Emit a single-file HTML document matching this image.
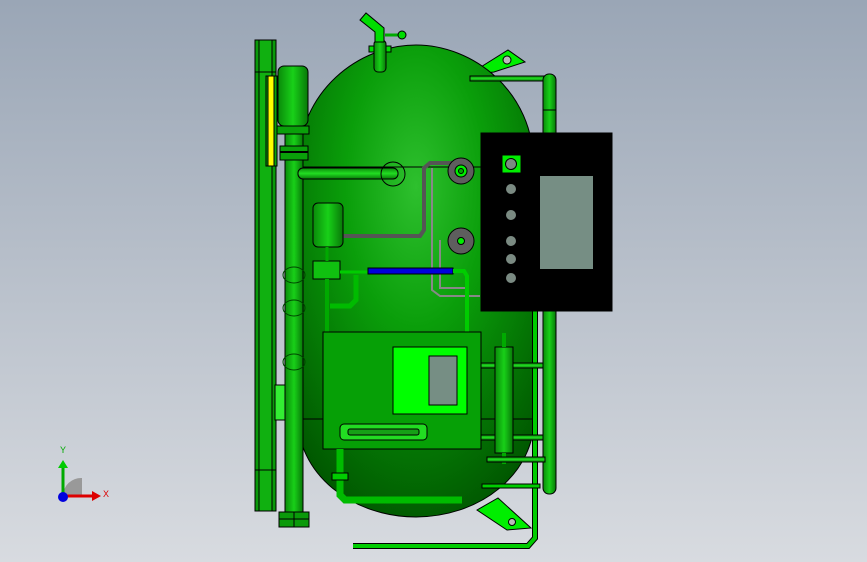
<!DOCTYPE html>
<html><head><meta charset="utf-8"><style>
html,body{margin:0;padding:0;width:867px;height:562px;overflow:hidden}
svg{display:block}
</style></head><body>
<svg width="867" height="562" viewBox="0 0 867 562" xmlns="http://www.w3.org/2000/svg" stroke="#000" stroke-width="1">
<defs>
<linearGradient id="bg" x1="0" y1="0" x2="0" y2="1"><stop offset="0" stop-color="#9aa6b6"/><stop offset="1" stop-color="#d8dbe0"/></linearGradient>
<radialGradient id="tank" cx="0.5" cy="0.3" r="0.75"><stop offset="0" stop-color="#2ec02e"/><stop offset="0.4" stop-color="#0a9e0a"/><stop offset="1" stop-color="#005500"/></radialGradient>
<linearGradient id="pipe" x1="0" y1="0" x2="1" y2="0"><stop offset="0" stop-color="#0a8a0a"/><stop offset="0.5" stop-color="#18d018"/><stop offset="1" stop-color="#087808"/></linearGradient>
<linearGradient id="pipeh" x1="0" y1="0" x2="0" y2="1"><stop offset="0" stop-color="#0a8a0a"/><stop offset="0.5" stop-color="#22dd22"/><stop offset="1" stop-color="#087808"/></linearGradient>
</defs>
<rect width="867" height="562" fill="url(#bg)" stroke="none"/>
<!-- brackets -->
<polygon points="468,75 508,50 525,62 494,72" fill="#00ee00"/>
<circle cx="507" cy="60" r="4" fill="#bbb"/>
<polygon points="477,510 498,498 531,528 507,530" fill="#00ee00"/>
<circle cx="512" cy="522" r="3.5" fill="#bbb"/>
<!-- tank -->
<path d="M298,167 C298,90 360,45 416,45 C472,45 534,90 534,167 L534,419 A118,98 0 0 1 298,419 Z" fill="url(#tank)"/>
<line x1="298" y1="167" x2="534" y2="167"/>
<line x1="298" y1="419" x2="534" y2="419"/>
<!-- top nozzle -->
<rect x="369" y="46" width="22" height="6" fill="#00dd00"/>
<rect x="374" y="40" width="12" height="32" rx="4" fill="url(#pipe)"/>
<path d="M360,20 L366,13 L384,28 L384,42 L375,42 L375,32 Z" fill="#00dd00"/>
<line x1="385" y1="35" x2="400" y2="35" stroke="#00aa00" stroke-width="3"/>
<circle cx="402" cy="35" r="4" fill="#00dd00"/>
<!-- top right pipe -->
<rect x="470" y="76" width="80" height="5" fill="url(#pipeh)"/>
<rect x="543" y="74" width="13" height="420" rx="6" fill="url(#pipe)"/>
<line x1="543" y1="110" x2="556" y2="110"/>
<!-- left flange plate -->
<rect x="255" y="40" width="21" height="471" fill="#0a9a0a"/>
<rect x="259" y="40" width="13" height="471" fill="#10b010"/>
<line x1="255" y1="72" x2="276" y2="72"/>
<line x1="255" y1="470" x2="276" y2="470"/>
<rect x="266" y="76" width="11" height="90" fill="#0aa00a"/>
<rect x="268" y="76" width="6" height="90" fill="#ffff00"/>
<rect x="275" y="385" width="12" height="35" fill="#33ee33"/>
<!-- left vertical pipe & motor -->
<rect x="285" y="118" width="18" height="400" fill="url(#pipe)"/>
<rect x="279" y="512" width="30" height="15" fill="#0a9a0a"/>
<line x1="279" y1="519" x2="309" y2="519"/><line x1="294" y1="512" x2="294" y2="527"/>
<rect x="278" y="66" width="30" height="60" rx="6" fill="url(#pipe)"/>
<rect x="277" y="126" width="32" height="8" fill="#0aa00a"/>
<rect x="280" y="146" width="28" height="14" fill="#0aa00a"/>
<line x1="280" y1="152" x2="308" y2="152" stroke-width="2"/>
<g fill="none" stroke="#004400"><ellipse cx="294" cy="275" rx="11" ry="8"/><ellipse cx="294" cy="308" rx="11" ry="8"/><ellipse cx="294" cy="362" rx="11" ry="8"/></g>
<!-- horizontal pipe left -->
<rect x="298" y="168" width="100" height="11" rx="5" fill="url(#pipeh)"/>
<circle cx="393" cy="174" r="12" fill="none"/>
<!-- grey tubes -->
<path d="M342,236 L420,236 L424,230 L424,168 L430,163 L460,163" fill="none" stroke="#555" stroke-width="4"/>
<path d="M432,168 L432,290 L440,296 L480,296" fill="none" stroke="#888" stroke-width="2"/>
<path d="M440,240 L440,288 L465,288" fill="none" stroke="#888" stroke-width="2"/>
<circle cx="461" cy="171" r="13" fill="#5e5e5e"/><circle cx="461" cy="171" r="6" fill="#00ee00"/><circle cx="461" cy="171" r="2.5" fill="#0a0"/>
<circle cx="461" cy="241" r="13" fill="#5e5e5e"/><circle cx="461" cy="241" r="3.5" fill="#00ee00"/>
<!-- small motor -->
<rect x="313" y="203" width="30" height="44" rx="5" fill="url(#pipe)"/>
<rect x="313" y="261" width="27" height="18" fill="#10c010"/>
<line x1="327" y1="247" x2="327" y2="261" stroke="#0a0" stroke-width="3"/>
<line x1="327" y1="279" x2="327" y2="332" stroke="#0a0" stroke-width="4"/>
<path d="M340,272 L370,272" stroke="#0c0" stroke-width="3"/>
<path d="M330,306 L350,306 L356,300 L356,275" fill="none" stroke="#0b0" stroke-width="5"/>
<rect x="368" y="268" width="85" height="6" fill="#0000dd"/>
<path d="M453,271 L464,271 L467,276 L467,332" fill="none" stroke="#0c0" stroke-width="4"/>
<!-- right lower pipe (behind panel) -->
<path d="M535,311 L535,538 L528,546 L353,546" fill="none" stroke="#000" stroke-width="6"/>
<path d="M535,311 L535,538 L528,546 L353,546" fill="none" stroke="#0c0" stroke-width="4"/>
<!-- control panel -->
<rect x="481" y="133" width="131" height="178" fill="#000"/>
<rect x="540" y="176" width="53" height="93" fill="#768e84" stroke="none"/>
<rect x="502" y="155" width="19" height="18" fill="#00ee00"/>
<circle cx="511" cy="164" r="5.5" fill="#7a8a82"/>
<g fill="#7a8a82" stroke="none"><circle cx="511" cy="189" r="5"/><circle cx="511" cy="215" r="5"/><circle cx="511" cy="241" r="5"/><circle cx="511" cy="259" r="5"/><circle cx="511" cy="278" r="5"/></g>
<!-- lower box -->
<rect x="323" y="332" width="158" height="117" fill="#06a006"/>
<rect x="393" y="347" width="74" height="67" fill="#00ff00"/>
<rect x="429" y="356" width="28" height="49" fill="#768e84"/>
<rect x="340" y="424" width="87" height="16" rx="4" fill="#22dd22"/>
<rect x="348" y="429" width="71" height="6" rx="2" fill="#16a016"/>
<!-- right cylinder -->
<rect x="481" y="363" width="62" height="5" fill="url(#pipeh)"/>
<rect x="481" y="435" width="62" height="5" fill="url(#pipeh)"/>
<rect x="495" y="347" width="18" height="106" fill="url(#pipe)"/>
<line x1="504" y1="333" x2="504" y2="347" stroke="#0a0" stroke-width="4"/>
<line x1="504" y1="453" x2="504" y2="464" stroke="#0a0" stroke-width="4"/>
<rect x="487" y="457" width="58" height="5" fill="url(#pipeh)"/>
<!-- bottom pipes -->
<path d="M340,449 L340,495 L345,500 L462,500" fill="none" stroke="#0b0" stroke-width="7"/>
<rect x="332" y="473" width="16" height="7" fill="#0c0"/>
<rect x="482" y="484" width="58" height="4" fill="#0c0"/>
<!-- axis icon -->
<path d="M63,496 A18,18 0 0 1 82,478 L82,496 Z" fill="#999" stroke="none"/>
<line x1="63" y1="496" x2="63" y2="466" stroke="#00aa00" stroke-width="3"/>
<polygon points="58,468 63,460 68,468" fill="#00cc00" stroke="none"/>
<line x1="63" y1="496" x2="94" y2="496" stroke="#dd0000" stroke-width="3"/>
<polygon points="92,491 101,496 92,501" fill="#dd0000" stroke="none"/>
<circle cx="63" cy="497" r="5" fill="#0000dd" stroke="none"/>
<text x="60" y="453" font-family="Liberation Sans, sans-serif" font-size="9" fill="#00aa00" stroke="none">Y</text>
<text x="103" y="497" font-family="Liberation Sans, sans-serif" font-size="9" fill="#dd0000" stroke="none">X</text>
</svg>
</body></html>
